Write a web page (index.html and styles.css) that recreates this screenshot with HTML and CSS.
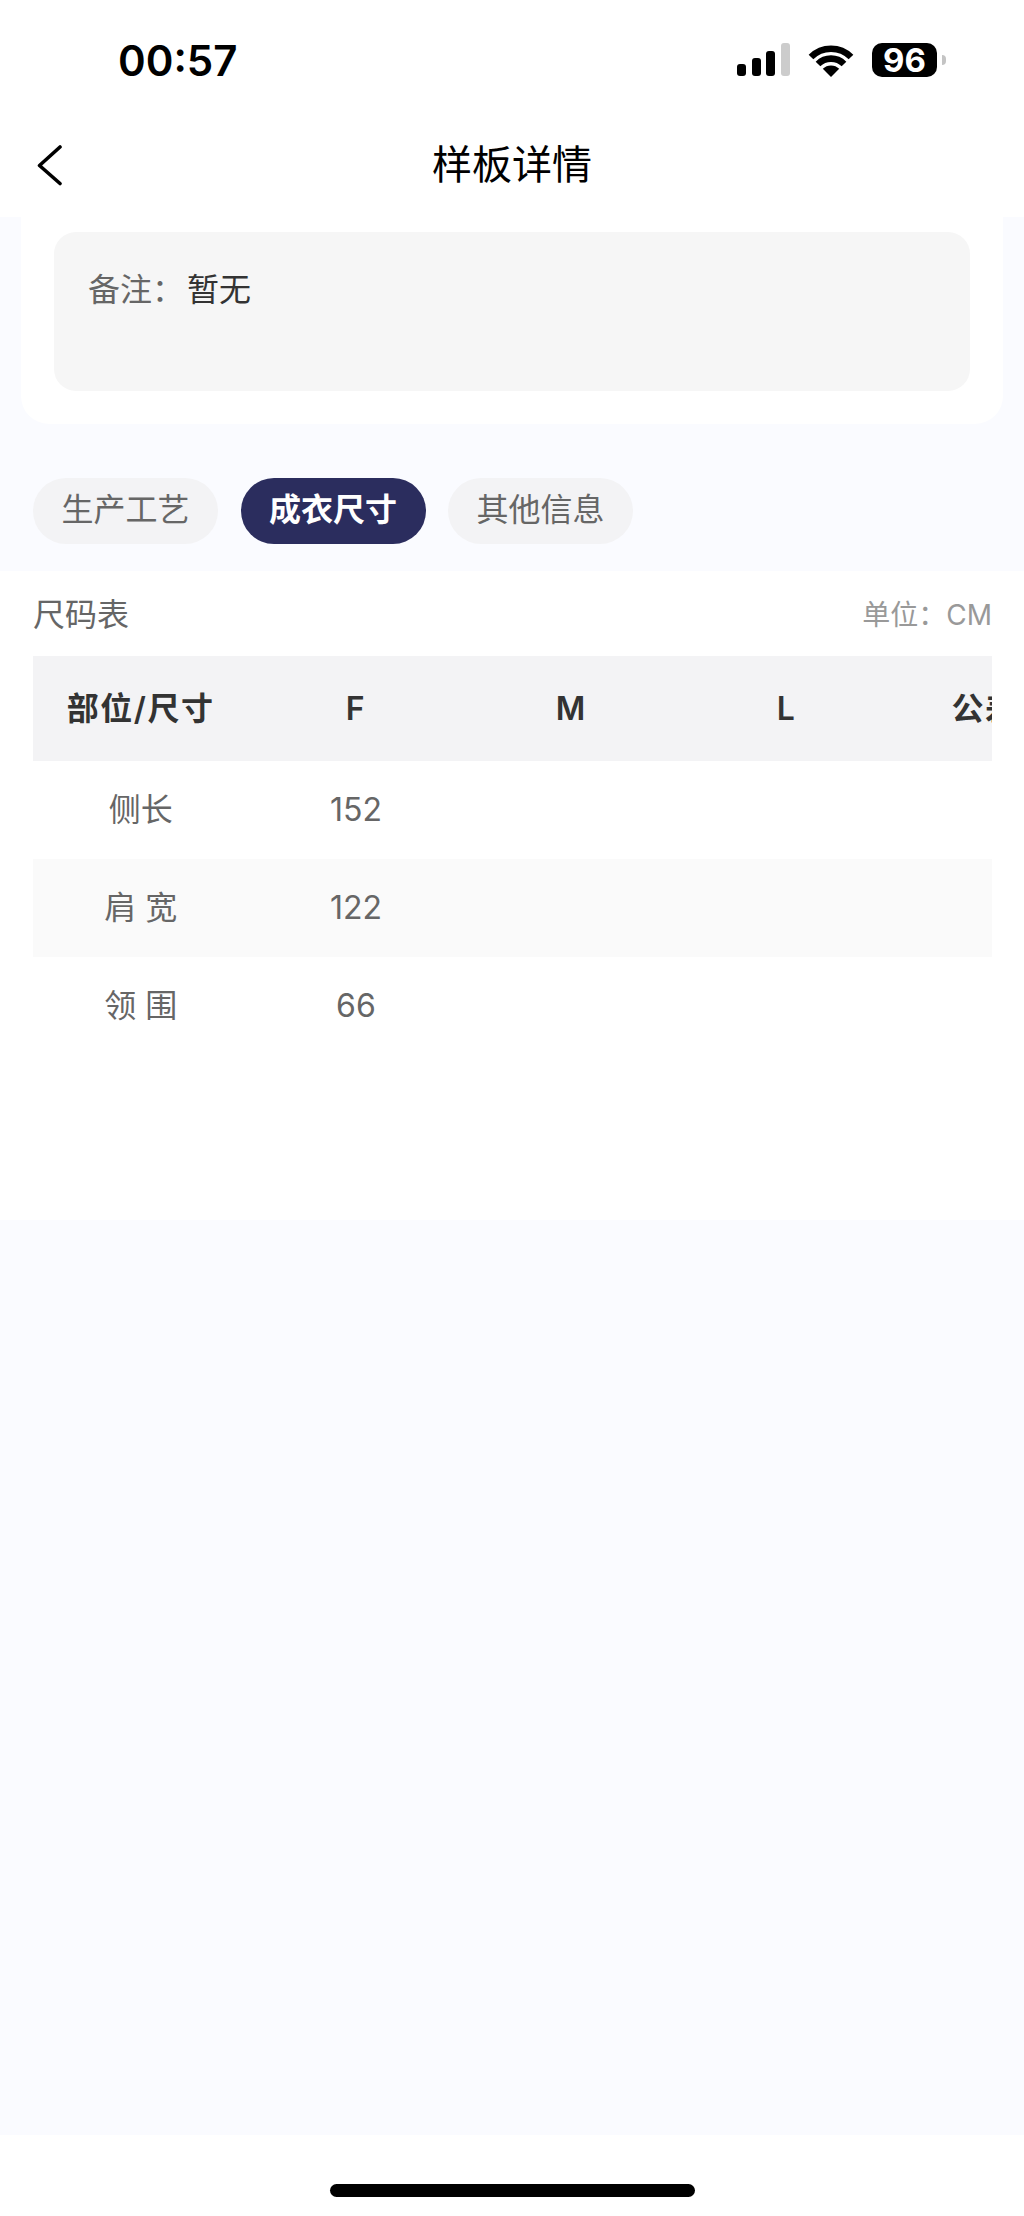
FILE: index.html
```html
<!DOCTYPE html>
<html lang="zh-CN">
<head>
<meta charset="utf-8">
<title>样板详情</title>
<link rel="stylesheet" href="styles.css">
</head>
<body>
<div class="page">
  <header class="top">
    <div class="status">
      <span class="time">00:57</span>
      <div class="indicators">
        <div class="signal">
          <i class="bar b1"></i><i class="bar b2"></i><i class="bar b3"></i><i class="bar b4"></i>
        </div>
        <svg class="wifi" width="46" height="34" viewBox="0 0 46 34">
          <path d="M23 34 L14.8 25.8 A11.6 11.6 0 0 1 31.2 25.8 Z" fill="#000"/>
          <path d="M10 21 A18.4 18.4 0 0 1 36 21" fill="none" stroke="#000" stroke-width="6.6"/>
          <path d="M3 14 A28.3 28.3 0 0 1 43 14" fill="none" stroke="#000" stroke-width="6.6"/>
        </svg>
        <div class="battery"><span class="level">96</span></div>
        <i class="nub"></i>
      </div>
    </div>
    <nav class="nav">
      <svg class="back" width="26" height="42" viewBox="0 0 26 42">
        <path d="M23 3 L2.5 21.5 L23 39.500" fill="none" stroke="#000" stroke-width="3.6" stroke-linecap="round" stroke-linejoin="round"/>
      </svg>
      <h1 class="title">样板详情</h1>
    </nav>
  </header>

  <section class="card">
    <div class="remark"><span class="remark-label">备注&#xFF1A;</span><span class="remark-value">暂无</span></div>
  </section>

  <div class="tabs">
    <span class="tab">生产工艺</span>
    <span class="tab active">成衣尺寸</span>
    <span class="tab">其他信息</span>
  </div>

  <section class="sizes">
    <div class="sizes-head">
      <span class="sizes-title">尺码表</span>
      <span class="unit">单位&#xFF1A;CM</span>
    </div>
    <div class="table">
      <div class="row head"><span class="cell">部位/尺寸</span><span class="cell">F</span><span class="cell">M</span><span class="cell">L</span><span class="cell">公差值</span></div>
      <div class="row"><span class="cell">侧长</span><span class="cell">152</span><span class="cell"></span><span class="cell"></span><span class="cell"></span></div>
      <div class="row alt"><span class="cell">肩 宽</span><span class="cell">122</span><span class="cell"></span><span class="cell"></span><span class="cell"></span></div>
      <div class="row"><span class="cell">领 围</span><span class="cell">66</span><span class="cell"></span><span class="cell"></span><span class="cell"></span></div>
    </div>
  </section>

  <div class="spacer"></div>

  <footer class="home"><i class="home-bar"></i></footer>
</div>
</body>
</html>
```

FILE: styles.css
```css
* { box-sizing: border-box; }
html, body { margin: 0; padding: 0; }
body {
  width: 1024px;
  height: 2216px;
  font-family: "Inter", "Noto Sans CJK SC", sans-serif;
  color: #666;
  background: #fafbff;
  overflow: hidden;
}
.page { display: flex; flex-direction: column; height: 2216px; }

.top { background: #fff; height: 217px; flex: none; }
.status {
  height: 120px;
  padding: 41px 0 0 118px;
  display: flex;
  justify-content: space-between;
  align-items: flex-start;
}
.time { font-size: 42px; font-weight: 600; line-height: 40px; color: #000; }
.indicators { display: flex; align-items: flex-start; padding: 2px 78px 0 0; }
.signal { display: flex; align-items: flex-end; gap: 5.6px; height: 33px; }
.bar { display: block; width: 9px; background: #000; border-radius: 3px; }
.b1 { height: 12px; }
.b2 { height: 18px; }
.b3 { height: 25px; }
.b4 { height: 33px; background: #ccc; }
.wifi { margin-left: 18px; }
.battery {
  margin-left: 18px;
  width: 65px;
  height: 34px;
  background: #000;
  border-radius: 10px;
  display: flex;
  align-items: center;
  justify-content: center;
}
.level { font-size: 33px; font-weight: 700; line-height: 34px; color: #fff; }
.nub {
  display: block;
  width: 4px;
  height: 10px;
  margin: 12px 0 0 5px;
  background: #c4c4c4;
  border-radius: 0 4px 4px 0;
}

.nav { height: 97px; padding: 20px 0 0 37px; display: flex; position: relative; align-items: flex-start; }
.back { margin-top: 4px; }
.title {
  position: absolute;
  left: 0;
  right: 0;
  top: 17px;
  margin: 0;
  text-align: center;
  font-size: 40px;
  font-weight: 400;
  line-height: 56px;
  color: #000;
}

.card {
  flex: none;
  margin: 0 21px 0 21px;
  padding: 15px 33px 33px;
  background: #fff;
  border-radius: 0 0 28px 28px;
}
.remark {
  height: 159px;
  padding: 36px 34px 0;
  background: #f6f6f6;
  border-radius: 22px;
  font-size: 32px;
  line-height: 44px;
  display: flex;
  gap: 3px;
}
.remark-label { color: #666; }
.remark-value { color: #333; }

.tabs { flex: none; display: flex; gap: 22.5px; padding: 54px 33px 27px; }
.tab {
  height: 66px;
  width: 185px;
  text-align: center;
  border-radius: 33px;
  background: #f3f3f5;
  font-size: 32px;
  line-height: 64px;
  color: #666;
}
.tab.active { background: #2b2d5e; color: #fff; font-weight: 700; }

.sizes { flex: none; height: 649px; background: #fff; padding: 0 32px 0 33px; }
.sizes-head {
  height: 85px;
  padding-top: 22px;
  display: flex;
  justify-content: space-between;
  align-items: flex-start;
}
.sizes-title { font-size: 32px; line-height: 44px; color: #666; }
.unit { font-size: 28px; line-height: 44px; color: #999; }

.table { overflow: hidden; }
.row { display: flex; height: 98px; }
.row.head { height: 105px; background: #f3f3f5; font-weight: 600; color: #333; }
.row.alt { background: #fafafa; }
.cell {
  flex: 0 0 215.300px;
  text-align: center;
  white-space: nowrap;
  font-size: 32px;
  line-height: 98px;
}
.row.head .cell { line-height: 106px; letter-spacing: 1.5px; }

.spacer { flex: 1 1 auto; }
.home { flex: none; height: 81px; background: #fff; display: flex; justify-content: center; padding-top: 49px; }
.home-bar { display: block; width: 365px; height: 13px; background: #000; border-radius: 7px; }
```
